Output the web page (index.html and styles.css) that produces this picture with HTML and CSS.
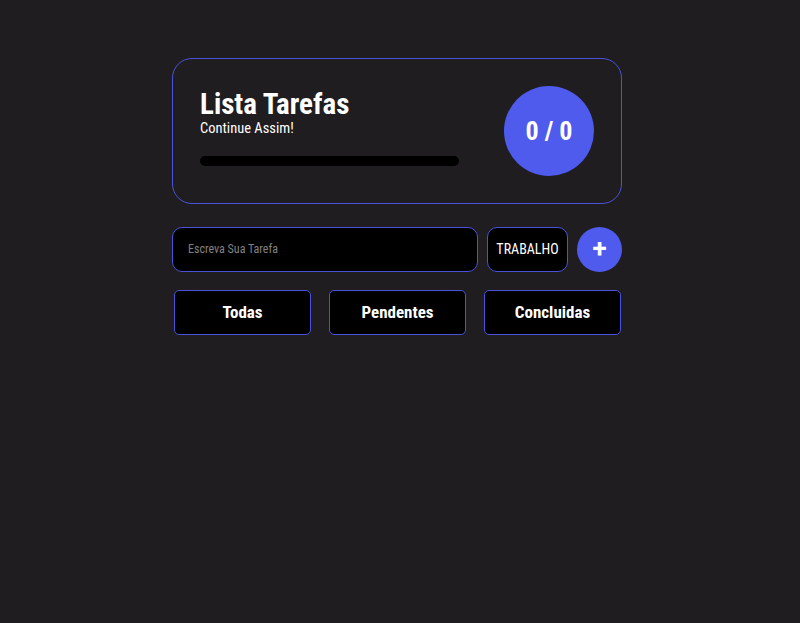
FILE: index.html
```html
<!DOCTYPE html>
<html lang="pt">
<head>
<meta charset="utf-8">
<title>Lista Tarefas</title>
<link rel="stylesheet" href="styles.css">
</head>
<body>
<main class="app">
  <section class="card">
    <div class="card-info">
      <h1 class="title">Lista Tarefas</h1>
      <p class="subtitle">Continue Assim!</p>
      <div class="progress"><div class="progress-fill" style="width:0%"></div></div>
    </div>
    <div class="counter">0 / 0</div>
  </section>
  <form class="add-row">
    <input class="task-input" type="text" placeholder="Escreva Sua Tarefa">
    <div class="category">TRABALHO</div>
    <button class="add-btn" type="button">+</button>
  </form>
  <nav class="filters">
    <button class="filter" type="button">Todas</button>
    <button class="filter" type="button">Pendentes</button>
    <button class="filter" type="button">Concluidas</button>
  </nav>
</main>
</body>
</html>
```
FILE: styles.css
```css
html, body {
  margin: 0;
  padding: 0;
  background: #1f1d20;
  height: 100%;
}
body {
  font-family: "Roboto", sans-serif;
  font-stretch: condensed;
  color: #fff;
}
.app {
  width: 450px;
  margin: 58px 0 0 172px;
  display: flex;
  flex-direction: column;
}
.card {
  box-sizing: border-box;
  height: 146px;
  border: 1px solid #4a52dc;
  border-radius: 20px;
  padding: 0 27px;
  display: flex;
  align-items: center;
  justify-content: space-between;
}
.card-info {
  display: flex;
  flex-direction: column;
  padding-bottom: 9px;
}
.title {
  margin: 0;
  font-size: 29px;
  font-weight: 700;
  line-height: 34px;
}
.subtitle {
  margin: 0;
  font-size: 14.5px;
  line-height: 16px;
}
.progress {
  margin-top: 19px;
  width: 259px;
  height: 10px;
  border-radius: 5px;
  background: #000;
}
.progress-fill {
  height: 100%;
  border-radius: 5px;
  background: #4f5bec;
}
.counter {
  width: 90px;
  height: 90px;
  border-radius: 50%;
  background: #4f5bec;
  display: flex;
  align-items: center;
  justify-content: center;
  font-size: 26px;
  font-weight: 700;
}
.add-row {
  margin: 23px 0 0;
  display: flex;
  align-items: center;
  gap: 9px;
  height: 45px;
}
.task-input {
  box-sizing: border-box;
  flex: 1;
  height: 45px;
  background: #000;
  border: 1px solid #4a52dc;
  border-radius: 10px;
  padding: 0 15px 2px;
  color: #fff;
  font-family: inherit;
  font-stretch: condensed;
  font-size: 12px;
  outline: none;
}
.task-input::placeholder {
  color: #808080;
}
.category {
  box-sizing: border-box;
  width: 81px;
  height: 45px;
  border: 1px solid #4a52dc;
  border-radius: 10px;
  background: #000;
  display: flex;
  align-items: center;
  justify-content: center;
  font-size: 14px;
  padding-bottom: 1px;
}
.add-btn {
  width: 45px;
  height: 45px;
  border-radius: 50%;
  border: none;
  background: #4f5bec;
  color: #fff;
  font-family: inherit;
  font-size: 26px;
  font-weight: 700;
  line-height: 1;
  padding: 0 0 3px;
  display: flex;
  align-items: center;
  justify-content: center;
}
.filters {
  margin: 18px 1px 0 2px;
  display: flex;
  justify-content: space-between;
}
.filter {
  box-sizing: border-box;
  width: 137px;
  height: 45px;
  background: #000;
  border: 1px solid #4a52dc;
  border-radius: 5px;
  color: #fff;
  font-family: inherit;
  font-stretch: condensed;
  font-size: 17px;
  font-weight: 700;
  padding: 0 0 2px;
}
```
